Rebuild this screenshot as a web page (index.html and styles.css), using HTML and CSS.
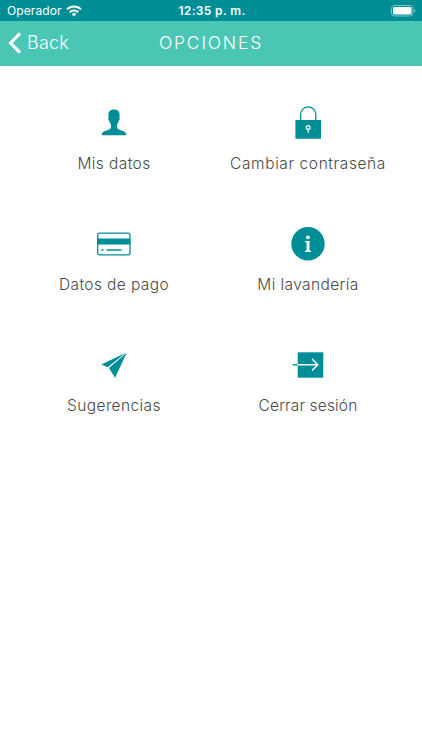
FILE: index.html
```
<!DOCTYPE html>
<html lang="es">
<head>
    <meta charset="UTF-8">
    <meta name="viewport" content="width=device-width, initial-scale=1.0">
    <title>Opciones</title>
    <link rel="stylesheet" href="styles.css">
</head>
<body>
    <div class="status-bar">
        <div class="carrier">
            <span>Operador</span>
            <svg width="16" height="12" viewBox="0 0 16 12" fill="none" stroke="#fff" stroke-width="2">
                <path d="M1 4.4a10 10 0 0 1 14 0"/>
                <path d="M3.7 7.2a6.1 6.1 0 0 1 8.6 0"/>
                <path d="M8 11.5 5.7 9.2a3.3 3.3 0 0 1 4.6 0z" fill="#fff" stroke="none"/>
            </svg>
        </div>
        <div class="time">12:35 p. m.</div>
        <div class="battery">
            <svg width="26" height="12" viewBox="0 0 26 12">
                <rect x="0.5" y="0.5" width="21.5" height="10.5" rx="3" fill="none" stroke="#7fc4c8"/>
                <rect x="2" y="2" width="18.5" height="7.5" rx="1.6" fill="#fff"/>
                <path d="M23.3 4v3.6q1.3-.5 1.3-1.8t-1.3-1.8z" fill="#7fc4c8"/>
            </svg>
        </div>
    </div>
    <div class="nav-bar">
        <a class="back">
            <svg width="14" height="22" viewBox="0 0 14 22" fill="none" stroke="#fff" stroke-width="3.2">
                <path d="M12 1.3 2.6 11 12 20.7"/>
            </svg>
            <span>Back</span>
        </a>
        <h1>OPCIONES</h1>
    </div>
    <div class="options">
        <a class="option">
            <svg class="icon" viewBox="0 0 40 40">
                <path d="M20 6.5c-3.8 0-5.7 2.1-5.6 5.600l.1 2.800c-.5.500-.2 1.900.6 2.700.4 1.700.9 2.700 1.800 3.700v3.200c-.4 2.100-3.500 2.600-6 3.600-2.100.8-3 2-3.300 4.100h24.800c-.3-2.100-1.200-3.300-3.300-4.100-2.500-1-5.600-1.500-6-3.600v-3.200c.9-1 1.400-2 1.800-3.700.8-.8 1.100-2.200.6-2.700l.1-2.800c.1-3.500-1.800-5.600-5.600-5.600z"/>
            </svg>
            <span class="label">Mis datos</span>
        </a>
        <a class="option">
            <svg class="icon" viewBox="0 0 40 40">
                <path d="M12.600 17v-5.500a7.600 7.600 0 0 1 15.200 0V17" fill="none" stroke="#008e96" stroke-width="1.3"/>
                <path d="M7.400 17h25.600v18.800H7.400z"/>
                <circle cx="20.200" cy="24.500" r="1.900" fill="none" stroke="#fff" stroke-width="1.2"/>
                <path d="M20.200 26.200v3.500" stroke="#fff" stroke-width="1.2"/>
            </svg>
            <span class="label label-wide">Cambiar contraseña</span>
        </a>
        <a class="option">
            <svg class="icon" viewBox="0 0 40 40">
                <rect x="3.700" y="9.200" width="32.300" height="21.700" rx="2" fill="none" stroke="#008e96" stroke-width="1.3"/>
                <path d="M3.500 14.500h32.700v6H3.500z"/>
                <path d="M7.500 26h2M12.500 26h15" stroke="#008e96" stroke-width="1.3"/>
            </svg>
            <span class="label">Datos de pago</span>
        </a>
        <a class="option">
            <svg class="icon" viewBox="0 0 40 40">
                <circle cx="20" cy="19.800" r="16.700"/>
                <circle cx="19.900" cy="13.300" r="1.900" fill="#fff"/>
                <path d="M17.100 17.100h4.400v9.300l1.600.7v.8h-6.200v-.8l1.700-.7v-7.800l-1.500-.6z" fill="#fff"/>
            </svg>
            <span class="label">Mi lavandería</span>
        </a>
        <a class="option">
            <svg class="icon" viewBox="0 0 40 40">
                <path d="M33 7.200 7.300 19.500l6.300 2.700zM33 7.200 14.800 22.700l6.300 10.100z"/>
                <path d="M33 7.200 13.800 23.400" stroke="#fff" stroke-width=".9"/>
            </svg>
            <span class="label">Sugerencias</span>
        </a>
        <a class="option">
            <svg class="icon" viewBox="0 0 40 40">
                <path d="M9.700 7.300h25.600v25.400H9.700z"/>
                <path d="M4.700 19.800h5" stroke="#008e96" stroke-width="1.4"/>
                <path d="M9.700 19.800h20M24 14l5.800 5.800-5.800 5.800" fill="none" stroke="#fff" stroke-width="1.4"/>
            </svg>
            <span class="label label-narrow">Cerrar sesión</span>
        </a>
    </div>
</body>
</html>
```
FILE: styles.css
```
body {
    font-family: 'Inter', sans-serif;
    margin: 0;
    padding: 0;
    background-color: #fff;
}
.status-bar {
    display: grid;
    grid-template-columns: 1fr auto 1fr;
    align-items: center;
    height: 21px;
    padding: 0 5px 0 7px;
    background-color: #008e96;
    color: #fff;
    font-size: 12px;
}
.carrier {
    display: flex;
    align-items: center;
    gap: 4px;
    letter-spacing: 0.1px;
}
.time {
    font-weight: 600;
    letter-spacing: 0.35px;
}
.battery {
    display: flex;
    justify-content: flex-end;
}
.nav-bar {
    display: grid;
    grid-template-columns: 1fr auto 1fr;
    align-items: center;
    box-sizing: border-box;
    height: 45px;
    padding: 0 8px 2px;
    background-color: #4bc6b4;
    color: #fff;
}
.back {
    display: flex;
    align-items: center;
    gap: 5px;
    font-size: 18px;
    font-weight: 300;
    letter-spacing: 0.2px;
}
.nav-bar h1 {
    margin: 0;
    font-size: 17.5px;
    font-weight: 300;
    letter-spacing: 1.8px;
}
.options {
    display: grid;
    grid-template-columns: 194px 194px;
    grid-auto-rows: 121px;
    justify-content: center;
    padding-top: 37px;
}
.option {
    display: flex;
    flex-direction: column;
    align-items: center;
    gap: 11px;
}
.icon {
    width: 40px;
    height: 40px;
    fill: #008e96;
}
.label {
    color: #4a4a4a;
    font-size: 15.5px;
    font-weight: 300;
    line-height: 20px;
    letter-spacing: 0.4px;
    white-space: nowrap;
}
.label-wide {
    letter-spacing: 0.6px;
}
.label-narrow {
    letter-spacing: 0.15px;
}
```
